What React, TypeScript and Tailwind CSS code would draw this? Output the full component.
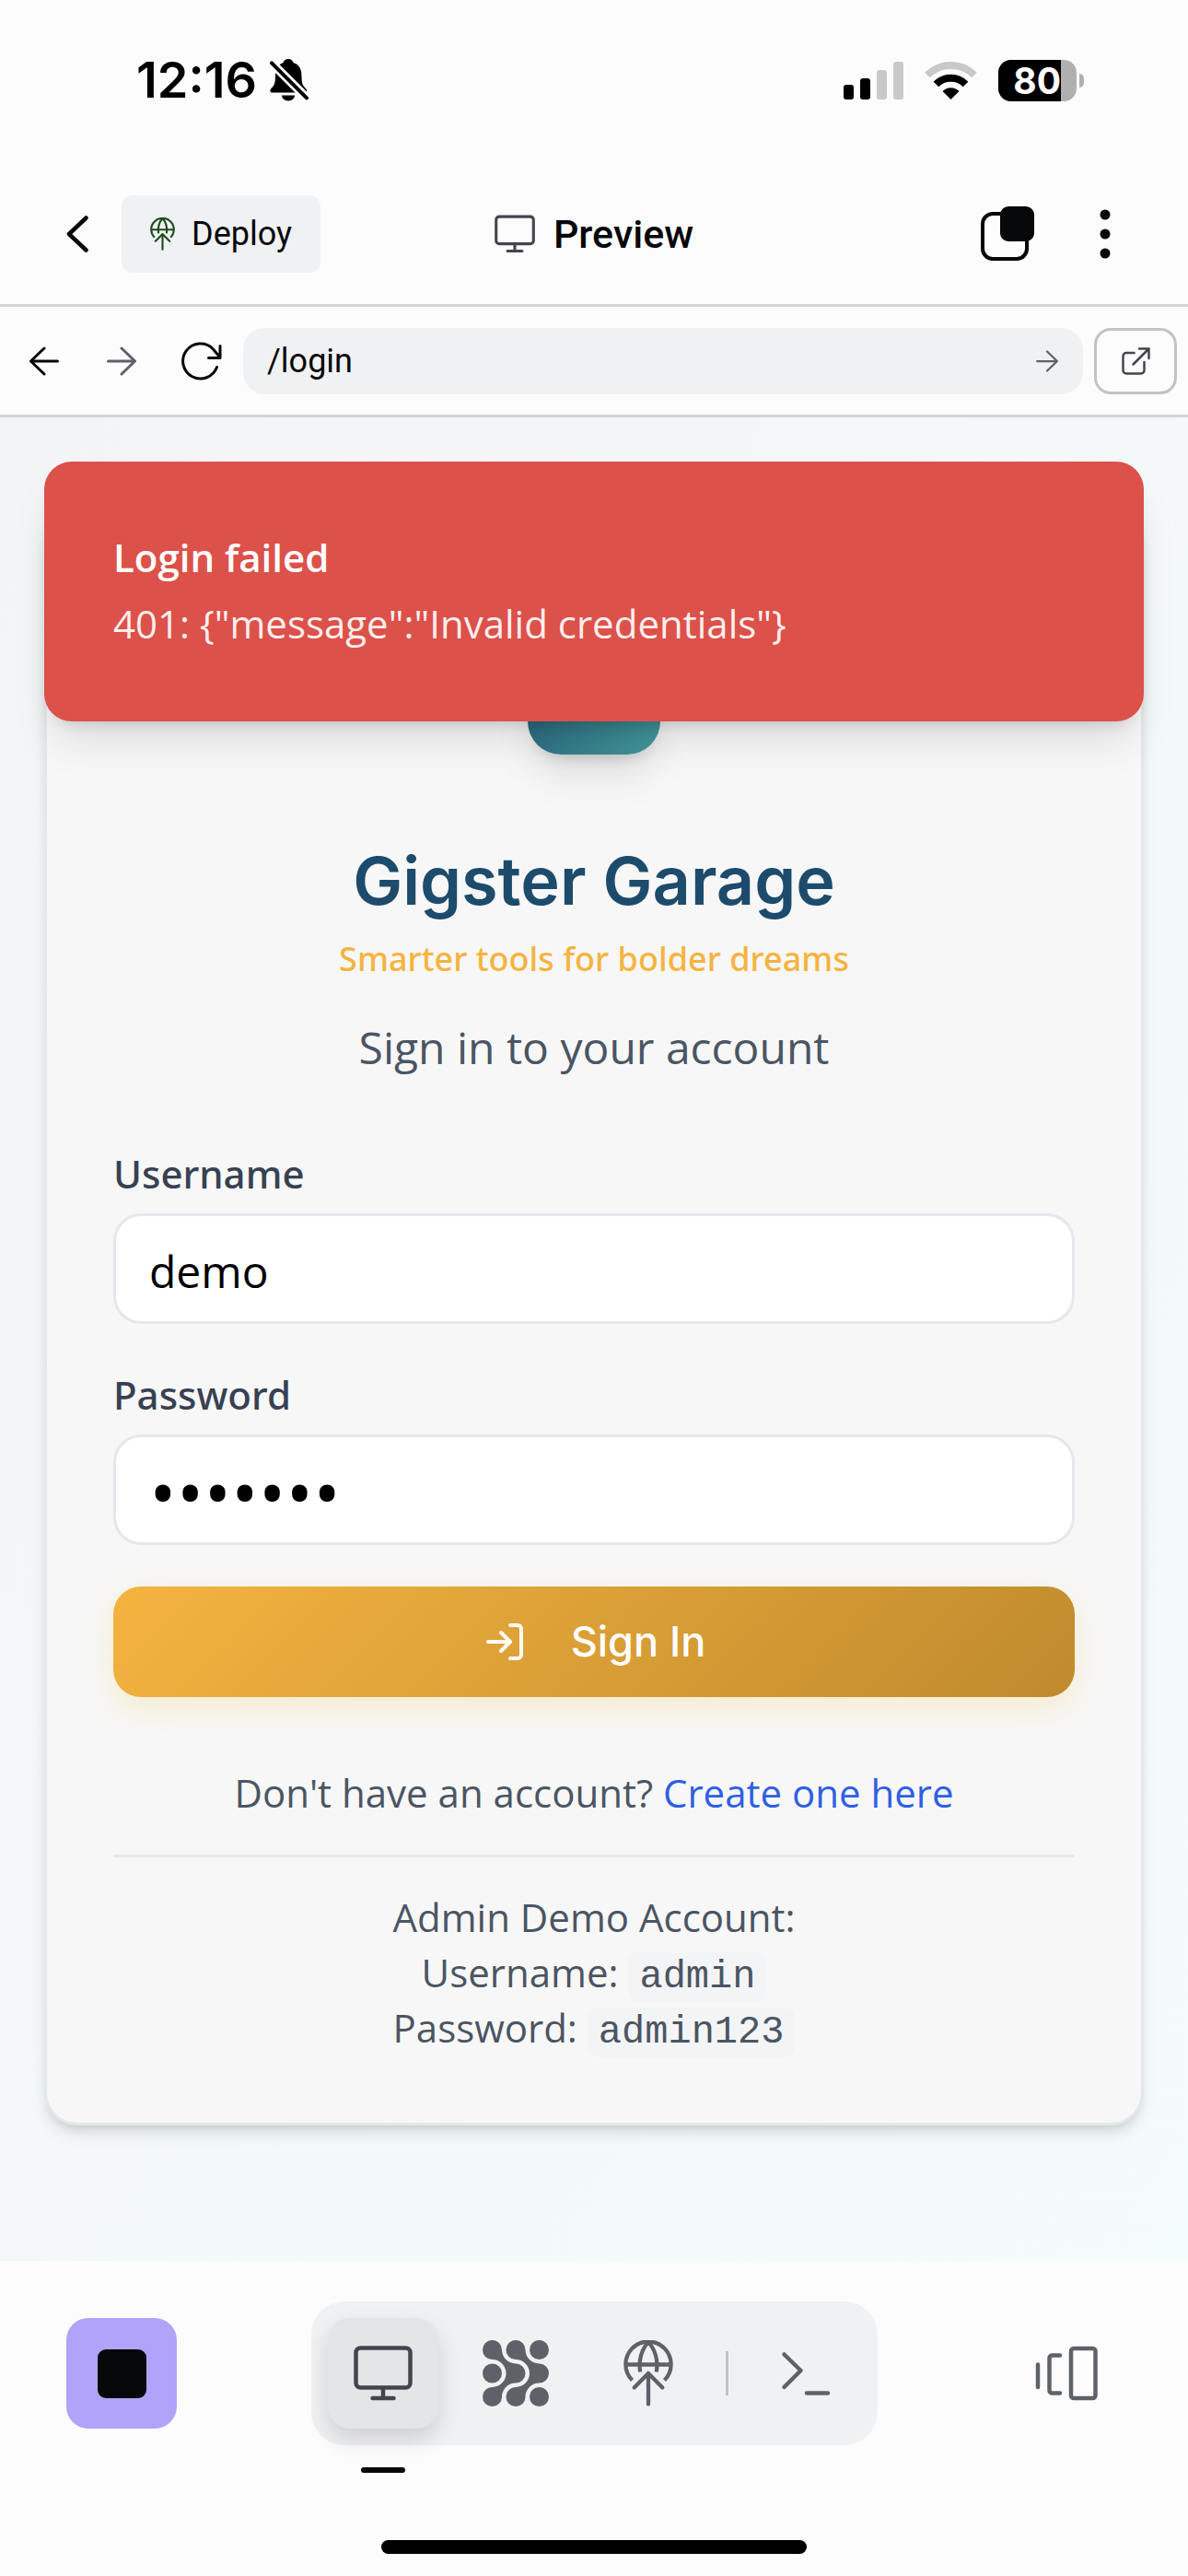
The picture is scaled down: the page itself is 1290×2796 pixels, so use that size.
import React from "react";
import { LogIn } from "lucide-react";

function BellOffIcon() {
  return (
    <svg width="42" height="46" viewBox="0 0 42 46" aria-hidden="true">
      <path
        d="M20 0c3 0 5 1.700 5.500 4C32 6 34.500 11 34.500 19c0 8 1.500 10 4.500 13 2 2.500 1.500 4.500-1 4.500H3C0 36.500-.5 34 1.500 32 5 28.500 6 26 6 18c0-7 3-12 8.500-14C15 1.700 17 0 20 0z"
        fill="#000"
      />
      <path d="M13 39.500h14a7 6 0 0 1-14 0z" fill="#000" />
      <path d="M0 2.300 42 44.300" stroke="#fcfcfc" strokeWidth="9.500" />
      <path d="M2 4.300 40 42.300" stroke="#000" strokeWidth="4" strokeLinecap="round" />
    </svg>
  );
}

function SignalIcon() {
  return (
    <svg width="65" height="41" viewBox="0 0 65 41" aria-hidden="true">
      <rect x="0" y="25" width="11" height="16" rx="3" fill="#000" />
      <rect x="18" y="18" width="11" height="23" rx="3" fill="#000" />
      <rect x="36" y="9" width="11" height="32" rx="3" fill="#c9c9c9" />
      <rect x="54" y="0" width="11" height="41" rx="3" fill="#c9c9c9" />
    </svg>
  );
}

function WifiIcon() {
  return (
    <svg width="57" height="42" viewBox="0 0 57 42" fill="none" aria-hidden="true">
      <path d="M3 15.500a36.500 36.500 0 0 1 51 0" stroke="#c9c9c9" strokeWidth="8" />
      <path d="M12.500 25.500a22.500 22.500 0 0 1 32 0" stroke="#000" strokeWidth="8" />
      <path d="M28.500 42 19.500 33a12.500 12.500 0 0 1 18 0z" fill="#000" />
    </svg>
  );
}

function Battery() {
  return (
    <div className="flex items-center gap-[3px]">
      <div className="flex h-[45px] w-[85px] rounded-[14px] bg-[#b0b0b0]">
        <div className="flex w-[68px] items-center justify-end rounded-l-[14px] bg-black text-[39px] leading-[45px] font-bold text-white">
          80
        </div>
      </div>
      <div className="h-[15px] w-[5px] rounded-r-[5px] bg-[#b0b0b0]" />
    </div>
  );
}

function DeployIcon({ className }: { className: string }) {
  return (
    <svg
      className={className}
      viewBox="0 0 54 72"
      fill="none"
      stroke="currentColor"
      strokeWidth="4.300"
      strokeLinecap="butt"
      strokeLinejoin="round"
      aria-hidden="true"
    >
      <path d="M9.500 43.500a24.600 24.600 0 1 1 35 0M2.500 26.500h49" />
      <path d="M27 2.500C20 9 16 22 18.200 34.500M27 2.500c7 6.500 11 19.500 8.800 32" />
      <path d="M11.700 51.500 27 36l15.300 15.500M27 36v33.500" strokeLinecap="round" />
    </svg>
  );
}

function MonitorIcon({ className }: { className: string }) {
  return (
    <svg
      className={className}
      viewBox="0 0 64 60"
      fill="none"
      stroke="#43454e"
      strokeWidth="4.500"
      strokeLinecap="round"
      aria-hidden="true"
    >
      <rect x="2.500" y="2.500" width="59" height="43" rx="5" />
      <path d="M32 46v11M20.500 57h23" />
    </svg>
  );
}

function AgentIcon() {
  const ribbon =
    "M10.500 0A10.500 10.500 0 0 1 21 10.500A15 15 0 0 0 36 25.500A10.500 10.500 0 0 1 36 46.500A15 15 0 0 0 21 61.500A10.500 10.500 0 1 1 10.500 51A15 15 0 0 0 25.500 36A15 15 0 0 0 10.500 21A10.500 10.500 0 0 1 10.500 0Z";
  return (
    <svg width="72" height="72" viewBox="0 0 72 72" fill="#5f6169" aria-hidden="true">
      <path d={ribbon} />
      <path d={ribbon} transform="translate(25.500 0)" />
      <circle cx="61.500" cy="10.500" r="10.500" />
      <circle cx="10.500" cy="36" r="10.500" />
      <circle cx="61.500" cy="61.500" r="10.500" />
    </svg>
  );
}

function ArrowIcon({ className }: { className: string }) {
  return (
    <svg
      className={className}
      viewBox="0 0 32 32"
      fill="none"
      stroke="currentColor"
      strokeWidth="3"
      strokeLinecap="round"
      strokeLinejoin="round"
      aria-hidden="true"
    >
      <path d="M1.500 16h29M16 2l14.500 14L16 30" />
    </svg>
  );
}

function StatusBar() {
  return (
    <div className="flex h-[178px] items-center justify-between pr-[113px] pb-1 pl-[148px] font-['Inter',sans-serif] text-black">
      <div className="flex items-center gap-3.5">
        <span className="text-[54px] leading-[60px] font-semibold">12:16</span>
        <BellOffIcon />
      </div>
      <div className="flex items-center gap-[23px]">
        <SignalIcon />
        <WifiIcon />
        <Battery />
      </div>
    </div>
  );
}

function Header() {
  return (
    <header className="grid h-[155px] grid-cols-[1fr_auto_1fr] items-center border-b-[3px] border-[#d3d4d6] px-[60px] font-['Roboto',sans-serif] text-[#07080a]">
      <div className="flex items-center gap-6">
        <button type="button" aria-label="Back" className="flex h-[84px] w-12 items-center justify-center">
          <svg width="24" height="40" viewBox="0 0 24 40" fill="none" stroke="currentColor" strokeWidth="4.500" strokeLinecap="round" strokeLinejoin="round">
            <path d="M21.500 2.500 3 20l18.500 17.500" />
          </svg>
        </button>
        <button type="button" className="flex h-[84px] items-center gap-[18px] rounded-xl bg-[#f0f1f3] px-[31px] text-[36px] leading-[48px]">
          <DeployIcon className="h-9 w-[27px] text-[#1d4d1d]" />
          Deploy
        </button>
      </div>
      <h1 className="flex items-center gap-5 text-[43px] leading-[48px] font-medium">
        <MonitorIcon className="h-[42px] w-11" />
        Preview
      </h1>
      <div className="flex items-center justify-end gap-[47px]">
        <button type="button" aria-label="Tabs" className="flex h-[84px] items-center">
          <svg width="58" height="60" viewBox="0 0 58 60" aria-hidden="true">
            <rect x="2" y="8" width="48" height="49" rx="11" fill="none" stroke="#07080a" strokeWidth="4" />
            <rect x="21" y="0" width="37" height="38" rx="9" fill="#07080a" />
          </svg>
        </button>
        <button type="button" aria-label="More options" className="flex h-[84px] w-15 items-center justify-center">
          <svg width="12" height="54" viewBox="0 0 12 54" fill="currentColor">
            <circle cx="6" cy="6" r="5.500" />
            <circle cx="6" cy="27" r="5.500" />
            <circle cx="6" cy="48" r="5.500" />
          </svg>
        </button>
      </div>
    </header>
  );
}

function AddressBar() {
  return (
    <nav className="flex items-center border-b-[3px] border-[#d3d4d6] pt-[23px] pr-3 pb-[22px] pl-1.5 text-[#07080a]">
      <button type="button" aria-label="Go back" className="flex h-[72px] w-[84px] items-center justify-center">
        <ArrowIcon className="h-8 w-8 rotate-180" />
      </button>
      <button type="button" aria-label="Go forward" className="flex h-[72px] w-[84px] items-center justify-center text-[#5f6169]">
        <ArrowIcon className="h-8 w-8" />
      </button>
      <button type="button" aria-label="Reload" className="flex h-[72px] w-[90px] items-center justify-center">
        <svg width="46" height="42" viewBox="0 0 44 42" fill="none" stroke="currentColor" strokeWidth="3" strokeLinecap="round" strokeLinejoin="round">
          <path d="M38.500 27.500a19 19 0 1 1-4.500-20L42 17M42 4.500V17.500H29.500" />
        </svg>
      </button>
      <form className="flex h-[72px] flex-1 items-center rounded-[24px] bg-[#f0f1f3] pr-[27px] pl-[26px]">
        <input
          aria-label="Path"
          defaultValue="/login"
          className="min-w-0 flex-1 bg-transparent font-['Roboto',sans-serif] text-[36px] leading-[48px] outline-none"
        />
        <button type="button" aria-label="Go" className="text-[#5f6169]">
          <ArrowIcon className="h-6 w-6" />
        </button>
      </form>
      <button type="button" aria-label="Open in new tab" className="ml-3 flex h-[72px] w-[90px] items-center justify-center rounded-[18px] border-[3px] border-[#c0c5c4] text-[#43454e]">
        <svg width="32" height="32" viewBox="0 0 32 32" fill="none" stroke="currentColor" strokeWidth="2.500" strokeLinecap="round" strokeLinejoin="round">
          <path d="M14.500 7H6a3.500 3.500 0 0 0-3.500 3.500V26A3.500 3.500 0 0 0 6 29.500h16a3.500 3.500 0 0 0 3.500-3.500v-9M20 2.500h10.500V13M30 3 13.500 19.500" />
        </svg>
      </button>
    </nav>
  );
}

function Toast() {
  return (
    <div
      role="alert"
      className="absolute inset-x-12 top-12 rounded-[30px] bg-[#dc514a] px-[75px] pt-[71px] pb-[73px] text-[42px] text-white shadow-[0_30px_45px_-9px_rgba(0,0,0,0.1),0_12px_18px_-12px_rgba(0,0,0,0.18)]"
    >
      <p className="leading-[66px] font-semibold">Login failed</p>
      <p className="mt-1.5 leading-[66px] opacity-90">{'401: {"message":"Invalid credentials"}'}</p>
    </div>
  );
}

function Field({ id, label, type, value }: { id: string; label: string; type: string; value: string }) {
  const size = type === "password" ? "text-[79px] leading-none" : "text-[48px]";
  return (
    <div className="flex flex-col gap-[22px]">
      <label htmlFor={id} className="font-['Noto_Sans',sans-serif] text-[42px] leading-[42px] font-medium text-[#374151]">
        {label}
      </label>
      <input
        id={id}
        type={type}
        defaultValue={value}
        className={`h-[120px] w-full rounded-[30px] border-[3px] border-[#e5e7eb] bg-white px-9 pt-1 text-black outline-none ${size}`}
      />
    </div>
  );
}

function LoginCard() {
  const code = "rounded-xl bg-[#f3f4f6] px-3 py-[3px] font-['Liberation_Mono',monospace] leading-none";
  return (
    <section className="mx-12 flex flex-col rounded-[36px] border-[3px] border-[#e5e7eb] bg-[#f7f7f7] px-[72px] pt-[123px] pb-[73px] text-center shadow-[0_12px_18px_-3px_rgba(0,0,0,0.1),0_6px_12px_-6px_rgba(0,0,0,0.15)]">
      <div className="h-36 w-36 self-center rounded-[36px] bg-linear-to-br from-[#1d4b6c] to-[#449a9b] shadow-[0_30px_45px_-9px_rgba(0,0,0,0.1),0_12px_18px_-12px_rgba(0,0,0,0.2)]" />
      <h2 className="mt-[92px] font-['Inter',sans-serif] text-[72px] leading-[90px] font-semibold text-[#1d4b6c]">
        Gigster Garage
      </h2>
      <p className="mt-4 font-['Noto_Sans',sans-serif] text-[36px] leading-[48px] font-medium text-[#f5b440]">
        Smarter tools for bolder dreams
      </p>
      <p className="mt-9 text-[48px] leading-[72px] text-[#4b5563]">Sign in to your account</p>
      <form className="mt-20 flex flex-col text-left">
        <div className="flex flex-col gap-14">
          <Field id="username" label="Username" type="text" value="demo" />
          <Field id="password" label="Password" type="password" value="demo123" />
        </div>
        <button
          type="button"
          className="mt-[45px] flex h-[120px] items-center justify-center gap-12 rounded-[30px] bg-linear-135 from-[#f5b440] to-[#c08a2d] font-['Inter',sans-serif] text-[45px] leading-[60px] font-medium text-white shadow-[0_12px_36px_rgba(245,190,40,0.2)]"
        >
          <LogIn size={48} strokeWidth={2} aria-hidden="true" />
          Sign In
        </button>
      </form>
      <p className="mt-[74px] text-[42px] leading-[60px] text-[#4b5563]">
        Don't have an account?{" "}
        <a href="#register" className="text-[#2f5fe3]">
          Create one here
        </a>
      </p>
      <div className="mt-[37px] border-t-[3px] border-[#e5e7eb] pt-[35px] text-[42px] leading-[60px] text-[#4b5563]">
        <p>Admin Demo Account:</p>
        <p>
          Username: <code className={code}>admin</code>
        </p>
        <p>
          Password: <code className={code}>admin123</code>
        </p>
      </div>
    </section>
  );
}

function BottomBar() {
  const tab = "flex h-[120px] w-[120px] items-center justify-center rounded-[24px] text-[#5f6169]";
  return (
    <footer className="flex flex-col items-center pt-11 pb-6">
      <div className="flex w-full items-center justify-between px-[72px]">
        <button type="button" aria-label="Stop" className="flex h-[120px] w-[120px] items-center justify-center rounded-[24px] bg-[#b0a3f9]">
          <span className="h-[53px] w-[53px] rounded-[9px] bg-[#07080a]" />
        </button>
        <div className="flex items-center gap-6 rounded-[36px] bg-[#f0f1f3] p-[18px]">
          <button
            type="button"
            aria-label="Preview"
            className="relative flex h-[120px] w-[120px] items-center justify-center rounded-[24px] bg-[#e4e5e7] shadow-[0_12px_24px_rgba(0,0,0,0.14)]"
          >
            <MonitorIcon className="h-15 w-16" />
            <span className="absolute -bottom-12 h-1.5 w-12 rounded-[3px] bg-[#07080a]" />
          </button>
          <button type="button" aria-label="Agent" className={tab}>
            <AgentIcon />
          </button>
          <button type="button" aria-label="Deploy" className={tab}>
            <DeployIcon className="h-[72px] w-[54px]" />
          </button>
          <div className="h-12 w-[3px] bg-[#c0c2c5]" />
          <button type="button" aria-label="Console" className={tab}>
            <svg width="54" height="48" viewBox="0 0 54 48" fill="none" stroke="currentColor" strokeWidth="4.500" strokeLinecap="round" strokeLinejoin="round">
              <path d="M3.500 3.500 21.500 21 3.500 39M28 45.500h23" />
            </svg>
          </button>
        </div>
        <button type="button" aria-label="Switch pane" className={tab}>
          <svg width="68" height="60" viewBox="0 0 68 60" fill="none" stroke="currentColor" strokeWidth="4.500" strokeLinecap="round" strokeLinejoin="round">
            <path d="M3 20.500v24.500M27 10.500H18.500a3 3 0 0 0-3 3v35a3 3 0 0 0 3 3H27" />
            <rect x="39" y="3" width="26.500" height="54" rx="3" />
          </svg>
        </button>
      </div>
      <div className="mt-[103px] h-[15px] w-[462px] rounded-full bg-black" />
    </footer>
  );
}

export default function App() {
  return (
    <div className="flex min-h-screen flex-col bg-[#fcfcfc] font-['Open_Sans',sans-serif]">
      <StatusBar />
      <Header />
      <AddressBar />
      <main className="relative flex-1 bg-linear-to-br from-[#f3f4f6] to-[#f4fcfb] pt-24 pb-36">
        <LoginCard />
        <Toast />
      </main>
      <BottomBar />
    </div>
  );
}
